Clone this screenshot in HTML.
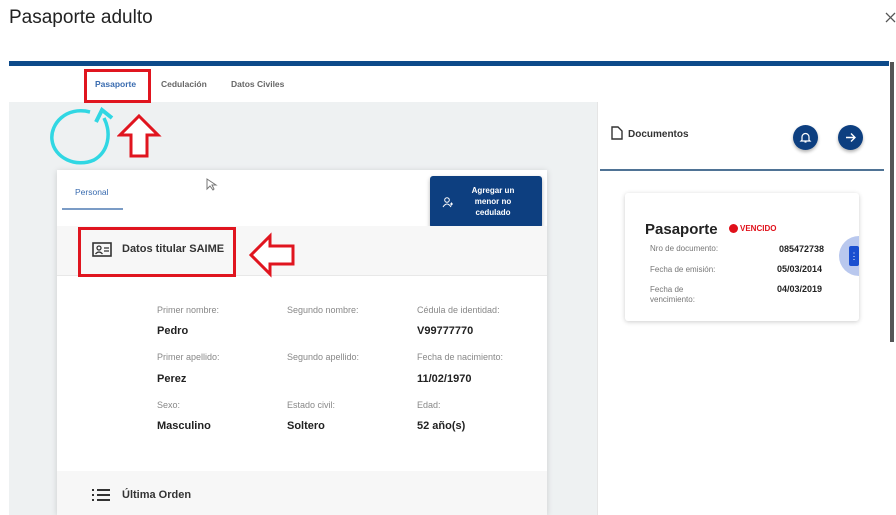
<!DOCTYPE html>
<html><head><meta charset="utf-8"><style>
*{margin:0;padding:0;box-sizing:border-box}
body{width:896px;height:515px;overflow:hidden;background:#fff;font-family:"Liberation Sans",sans-serif;position:relative}
.a{position:absolute}
.lbl{font-size:9px;color:#888;position:absolute}
.val{font-size:11px;font-weight:bold;color:#222;position:absolute}
</style></head><body>
<div class="a" style="left:9px;top:7px;font-size:19px;color:#222">Pasaporte adulto</div>
<svg class="a" style="left:885px;top:12px" width="11" height="11" viewBox="0 0 11 11"><path d="M1 1L10 10M10 1L1 10" stroke="#555" stroke-width="1.3"/></svg>
<div class="a" style="left:9px;top:61px;width:880px;height:5px;background:#0d4a8a"></div>
<div class="a" style="left:890px;top:62px;width:4px;height:280px;background:#555"></div>
<div class="a" style="left:9px;top:66px;width:880px;height:36px;background:#fff"></div>
<div class="a" style="left:9px;top:102px;width:588px;height:413px;background:#eef1f2"></div>
<div class="a" style="left:597px;top:102px;width:292px;height:413px;background:#fff;border-left:1px solid #e5e5e5"></div>
<div class="a" style="left:95px;top:79px;font-size:8.5px;font-weight:bold;color:#3a6cb0">Pasaporte</div>
<div class="a" style="left:161px;top:79px;font-size:8.5px;font-weight:bold;color:#666">Cedulación</div>
<div class="a" style="left:231px;top:79px;font-size:8.5px;font-weight:bold;color:#666">Datos Civiles</div>
<div class="a" style="left:84px;top:69px;width:67px;height:34px;border:3px solid #e0151f"></div>
<svg class="a" style="left:46px;top:100px" width="80" height="70" viewBox="0 0 80 70">
<path d="M44 12 C 20 6 4 24 6 40 C 8 58 30 68 48 60 C 62 52 66 34 58 18" fill="none" stroke="#30d7e3" stroke-width="3.5"/>
<path d="M50 22 L56 10 L66 18" fill="none" stroke="#30d7e3" stroke-width="4"/>
</svg>
<svg class="a" style="left:117px;top:113px" width="45" height="46" viewBox="0 0 45 46">
<path d="M22 3 L41 22 L30 22 L30 43 L14 43 L14 22 L3 22 Z" fill="#fff" stroke="#e0151f" stroke-width="3"/>
</svg>
<div class="a" style="left:57px;top:170px;width:490px;height:345px;background:#fff;box-shadow:0 1px 6px rgba(0,0,0,.15)"></div>
<div class="a" style="left:75px;top:187px;font-size:8.5px;color:#3a6cb0">Personal</div>
<div class="a" style="left:62px;top:208px;width:61px;height:2px;background:#7b9cc6"></div>
<svg class="a" style="left:206px;top:178px" width="12" height="14" viewBox="0 0 12 14"><path d="M1 1L1 11L4 8L7 12L8 11L6 7L10 7Z" fill="#fff" stroke="#777" stroke-width="1"/></svg>
<div class="a" style="left:430px;top:176px;width:112px;height:52px;background:#0d3f80;border-radius:3px;box-shadow:0 2px 4px rgba(0,0,0,.3)"></div>
<svg class="a" style="left:442px;top:196px" width="12" height="12" viewBox="0 0 12 12"><circle cx="5" cy="4" r="2.3" fill="none" stroke="#fff" stroke-width="1"/><path d="M1 11Q5 5 9 11M8 8h3M9.5 6.5v3" fill="none" stroke="#fff" stroke-width="1"/></svg>
<div class="a" style="left:462px;top:185px;width:62px;text-align:center;font-size:8px;font-weight:bold;color:#fff;line-height:11px">Agregar un menor no cedulado</div>
<div class="a" style="left:57px;top:226px;width:490px;height:50px;background:#f7f7f7;border-bottom:1px solid #e8e8e8"></div>
<svg class="a" style="left:92px;top:242px" width="20" height="15" viewBox="0 0 20 15"><rect x="1" y="1" width="18" height="13" fill="none" stroke="#333" stroke-width="1.6"/><circle cx="7" cy="6" r="2" fill="none" stroke="#333" stroke-width="1.3"/><path d="M3.5 12 Q7 8 10.5 12" fill="none" stroke="#333" stroke-width="1.3"/><path d="M12 6h5M12 9h5" stroke="#333" stroke-width="1.3"/></svg>
<div class="a" style="left:122px;top:243px;font-size:11px;font-weight:bold;color:#333">Datos titular SAIME</div>
<div class="a" style="left:78px;top:227px;width:158px;height:50px;border:3px solid #e0151f"></div>
<svg class="a" style="left:248px;top:232px" width="48" height="46" viewBox="0 0 48 46">
<path d="M3 23 L22 4 L22 14 L45 14 L45 32 L22 32 L22 42 Z" fill="#fff" stroke="#e0151f" stroke-width="3"/>
</svg>
<div class="lbl" style="left:157px;top:305px">Primer nombre:</div>
<div class="lbl" style="left:287px;top:305px">Segundo nombre:</div>
<div class="lbl" style="left:417px;top:305px">Cédula de identidad:</div>
<div class="val" style="left:157px;top:325px">Pedro</div>
<div class="val" style="left:417px;top:325px">V99777770</div>
<div class="lbl" style="left:157px;top:352px">Primer apellido:</div>
<div class="lbl" style="left:287px;top:352px">Segundo apellido:</div>
<div class="lbl" style="left:417px;top:352px">Fecha de nacimiento:</div>
<div class="val" style="left:157px;top:373px">Perez</div>
<div class="val" style="left:417px;top:373px">11/02/1970</div>
<div class="lbl" style="left:157px;top:400px">Sexo:</div>
<div class="lbl" style="left:287px;top:400px">Estado civil:</div>
<div class="lbl" style="left:417px;top:400px">Edad:</div>
<div class="val" style="left:157px;top:420px">Masculino</div>
<div class="val" style="left:287px;top:420px">Soltero</div>
<div class="val" style="left:417px;top:420px">52 año(s)</div>
<div class="a" style="left:57px;top:471px;width:490px;height:44px;background:#f7f7f7"></div>
<svg class="a" style="left:91px;top:488px" width="20" height="14" viewBox="0 0 20 14"><path d="M1 2h2M6 2h13M1 7h2M6 7h13M1 12h2M6 12h13" stroke="#333" stroke-width="2"/></svg>
<div class="a" style="left:122px;top:489px;font-size:11px;font-weight:bold;color:#333">Última Orden</div>
<svg class="a" style="left:611px;top:126px" width="12" height="14" viewBox="0 0 12 14"><path d="M1 1h6l4 4v8H1z" fill="none" stroke="#333" stroke-width="1.4"/></svg>
<div class="a" style="left:628px;top:129px;font-size:10px;font-weight:bold;color:#333">Documentos</div>
<div class="a" style="left:793px;top:125px;width:25px;height:25px;border-radius:50%;background:#0d3f80;box-shadow:0 2px 3px rgba(0,0,0,.3)"></div>
<svg class="a" style="left:799px;top:131px" width="13" height="13" viewBox="0 0 13 13"><path d="M3 9V6a3.5 3.5 0 0 1 7 0v3l1 1H2z M5.5 11h2" fill="none" stroke="#fff" stroke-width="1.2"/></svg>
<div class="a" style="left:838px;top:125px;width:25px;height:25px;border-radius:50%;background:#0d3f80;box-shadow:0 2px 3px rgba(0,0,0,.3)"></div>
<svg class="a" style="left:844px;top:131px" width="13" height="13" viewBox="0 0 13 13"><path d="M2 6.5h9M7 2.5l4 4-4 4" fill="none" stroke="#fff" stroke-width="1.4"/></svg>
<div class="a" style="left:600px;top:169px;width:284px;height:2px;background:#4f7395"></div>
<div class="a" style="left:625px;top:193px;width:234px;height:128px;background:#fff;box-shadow:0 1px 5px rgba(0,0,0,.2);border-radius:3px;overflow:hidden">
<div class="a" style="left:20px;top:28px;font-size:15px;font-weight:bold;color:#222">Pasaporte</div>
<div class="a" style="left:104px;top:31px;width:9px;height:9px;border-radius:50%;background:#e0101a"></div>
<div class="a" style="left:115px;top:31px;font-size:8px;font-weight:bold;color:#e0101a">VENCIDO</div>
<div class="a" style="left:25px;top:51px;font-size:8px;color:#777">Nro de documento:</div>
<div class="a" style="left:154px;top:51px;font-size:9px;font-weight:bold;color:#222">085472738</div>
<div class="a" style="left:25px;top:72px;font-size:8px;color:#777">Fecha de emisión:</div>
<div class="a" style="left:152px;top:71px;font-size:9px;font-weight:bold;color:#222">05/03/2014</div>
<div class="a" style="left:25px;top:92px;font-size:8px;color:#777;line-height:10px">Fecha de<br>vencimiento:</div>
<div class="a" style="left:152px;top:91px;font-size:9px;font-weight:bold;color:#222">04/03/2019</div>
<div class="a" style="left:214px;top:43px;width:40px;height:40px;border-radius:50%;background:#b9c8ee"></div>
<div class="a" style="left:224px;top:53px;width:10px;height:20px;background:#1a4fd0;border-radius:2px;color:#fff;font-size:9px;text-align:center;line-height:20px">⋮</div>
</div>
</body></html>
